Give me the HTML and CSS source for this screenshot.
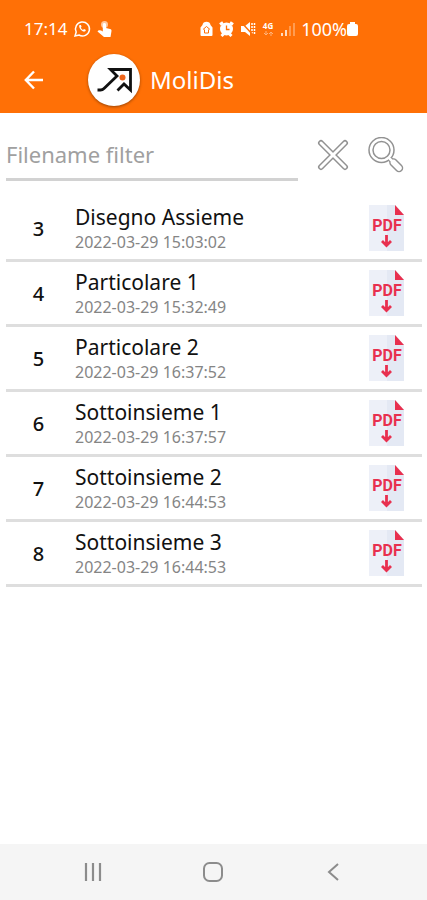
FILE: index.html
```html
<!DOCTYPE html>
<html lang="it">
<head>
    <meta charset="UTF-8">
    <meta name="viewport" content="width=device-width, initial-scale=1.0">
    <title>MoliDis</title>
    <link rel="stylesheet" href="styles.css">
</head>
<body>
    <!-- Foglio condiviso dalle icone PDF -->
    <svg class="defs" aria-hidden="true">
        <symbol id="pdf" viewBox="0 0 38 48">
            <path d="M1 1h26l9 10v36H1z" fill="#edf0f8"/>
            <path d="M19 1h8l9 10v36H19z" fill="#e4e9f4"/>
            <path d="M27 1l9 10h-9z" fill="#e8304f"/>
            <path d="M18.500 31v10M14 37l4.500 4.500L23 37" fill="none" stroke="#e8304f" stroke-width="2.800"/>
        </symbol>
    </svg>

    <header>
        <div class="status-bar">
            <div class="status-left">
                <span class="time">17:14</span>
                <svg width="18" height="18" viewBox="0 0 18 18" fill="none" stroke="#fff" stroke-width="1.500">
                    <path d="M2 16l1.200-4A7 7 0 1 1 6 15z"/>
                    <path d="M6.500 5c-1.600 2 2.500 7.500 5.500 6.500l1-1.500-2-1-1 1c-1-.5-1.700-1.200-2.200-2.200l.8-1-.7-1.800z" fill="#fff" stroke="none"/>
                </svg>
                <svg width="16" height="18" viewBox="0 0 16 18" fill="#fff">
                    <circle cx="7.500" cy="4.500" r="3.500" fill-opacity=".6"/>
                    <path d="M5.800 4.500c0-2 3.200-2 3.200 0V8l4 1c1.300.4 1.600 1 1.500 2L13.500 17H7L.5 11.500c1-1.800 3.300-1.300 5.300 0z"/>
                </svg>
            </div>
            <div class="status-right">
                <svg width="13" height="16" viewBox="0 0 13 16">
                    <path d="M2.500 4c0-4.500 8-4.500 8 0l2 2.500V14q0 1-1 1h-10q-1 0-1-1V6.500z" fill="#fff"/>
                    <path d="M3 8.500l3.500-3 3.500 3M4.500 8.500v3.500h4V8.500" fill="none" stroke="#ff7006" stroke-width="1"/>
                </svg>
                <svg width="15" height="16" viewBox="0 0 15 16">
                    <path d="M1 3.500l3-2M14 3.500l-3-2M2.500 15l2-2M12.500 15l-2-2" stroke="#fff" stroke-width="3"/>
                    <circle cx="7.500" cy="8" r="6.500" fill="#fff"/>
                    <path d="M7.500 4.500V8.500h3" fill="none" stroke="#ff7006" stroke-width="1.300"/>
                </svg>
                <svg width="16" height="16" viewBox="0 0 16 16">
                    <path d="M1 5h4l5-4v14l-5-4H1z" fill="#fff"/>
                    <path d="M12 2v12M14.500 2v12" stroke="#fff" stroke-width="1.500" stroke-dasharray="2 1"/>
                    <path d="M1 1l13 14" stroke="#ff7006" stroke-width="1.500"/>
                </svg>
                <svg width="13" height="16" viewBox="0 0 13 16">
                    <text class="net-label" x="6" y="8" text-anchor="middle">4G</text>
                    <path d="M4 10v4M2 12l2 2 2-2M9 15v-4M7 13l2-2 2 2" fill="none" stroke="#ffb27a"/>
                </svg>
                <svg width="14" height="16" viewBox="0 0 14 16" stroke-width="1.500">
                    <path d="M1 12v3M5 9v6" stroke="#fff"/>
                    <path d="M9 5v10M13 2v13" stroke="#ffaa6b"/>
                </svg>
                <span class="battery">100%
                    <svg width="11" height="16" viewBox="0 0 11 16">
                        <path d="M3 1h5v2h1q2 0 2 2v8q0 2-2 2H2q-2 0-2-2V5q0-2 2-2h1z" fill="#fff"/>
                    </svg>
                </span>
            </div>
        </div>
        <div class="app-bar">
            <button class="back" aria-label="Indietro">
                <svg width="20" height="20" viewBox="0 0 20 20" fill="none" stroke="#fff" stroke-width="2.400">
                    <path d="M19 10H2M10 1.500L1.800 10l8.200 8.500"/>
                </svg>
            </button>
            <div class="logo">
                <svg width="52" height="52" viewBox="0 0 52 52">
                    <path d="M9.500 36h3q2 0 3.500-1.500L29 22l-6.500-6.500H42.500V36L36 30l-6.500 6.500" fill="none" stroke="#111" stroke-width="2.800"/>
                    <circle cx="34.500" cy="23.500" r="3" fill="#f0651a"/>
                </svg>
            </div>
            <h1>MoliDis</h1>
        </div>
    </header>

    <main>
        <form class="filter">
            <input type="text" placeholder="Filename filter" aria-label="Filename filter">
            <button type="reset" aria-label="Cancella">
                <svg width="32" height="32" viewBox="0 0 32 32" stroke-linecap="round">
                    <path d="M4 4l24 24M28 4L4 28" stroke="#929292" stroke-width="6"/>
                    <path d="M4 4l24 24M28 4L4 28" stroke="#fff" stroke-width="3"/>
                </svg>
            </button>
            <button type="submit" aria-label="Cerca">
                <svg width="36" height="36" viewBox="0 0 36 36" fill="none" stroke-linecap="round">
                    <path d="M22 22l3 3" stroke="#929292" stroke-width="5"/>
                    <path d="M25.500 25.500l5.500 5.500" stroke="#929292" stroke-width="8.500"/>
                    <circle cx="13.500" cy="13" r="10.500" stroke="#929292" stroke-width="5.500"/>
                    <path d="M22 22l3 3" stroke="#fff" stroke-width="2.500"/>
                    <path d="M25.500 25.500l5.500 5.500" stroke="#fff" stroke-width="5.500"/>
                    <circle cx="13.500" cy="13" r="10.500" stroke="#fff" stroke-width="2.500"/>
                </svg>
            </button>
        </form>

        <ul class="file-list">
            <li class="file">
                <span class="number">3</span>
                <div class="info">
                    <h2>Disegno Assieme</h2>
                    <p>2022-03-29 15:03:02</p>
                </div>
                <button class="pdf" aria-label="Scarica Disegno Assieme"><svg><use href="#pdf"/></svg><span>PDF</span></button>
            </li>
            <li class="file">
                <span class="number">4</span>
                <div class="info">
                    <h2>Particolare 1</h2>
                    <p>2022-03-29 15:32:49</p>
                </div>
                <button class="pdf" aria-label="Scarica Particolare 1"><svg><use href="#pdf"/></svg><span>PDF</span></button>
            </li>
            <li class="file">
                <span class="number">5</span>
                <div class="info">
                    <h2>Particolare 2</h2>
                    <p>2022-03-29 16:37:52</p>
                </div>
                <button class="pdf" aria-label="Scarica Particolare 2"><svg><use href="#pdf"/></svg><span>PDF</span></button>
            </li>
            <li class="file">
                <span class="number">6</span>
                <div class="info">
                    <h2>Sottoinsieme 1</h2>
                    <p>2022-03-29 16:37:57</p>
                </div>
                <button class="pdf" aria-label="Scarica Sottoinsieme 1"><svg><use href="#pdf"/></svg><span>PDF</span></button>
            </li>
            <li class="file">
                <span class="number">7</span>
                <div class="info">
                    <h2>Sottoinsieme 2</h2>
                    <p>2022-03-29 16:44:53</p>
                </div>
                <button class="pdf" aria-label="Scarica Sottoinsieme 2"><svg><use href="#pdf"/></svg><span>PDF</span></button>
            </li>
            <li class="file">
                <span class="number">8</span>
                <div class="info">
                    <h2>Sottoinsieme 3</h2>
                    <p>2022-03-29 16:44:53</p>
                </div>
                <button class="pdf" aria-label="Scarica Sottoinsieme 3"><svg><use href="#pdf"/></svg><span>PDF</span></button>
            </li>
        </ul>
    </main>

    <nav class="nav-bar">
        <button aria-label="Recenti">
            <svg width="20" height="20" viewBox="0 0 20 20" stroke="#8c8c8c" stroke-width="2.200">
                <path d="M3 1v18M10 1v18M17 1v18"/>
            </svg>
        </button>
        <button aria-label="Home">
            <svg width="20" height="20" viewBox="0 0 20 20" fill="none" stroke="#8c8c8c" stroke-width="2">
                <rect x="1" y="1" width="18" height="18" rx="5.500"/>
            </svg>
        </button>
        <button aria-label="Indietro">
            <svg width="20" height="20" viewBox="0 0 20 20" fill="none" stroke="#8c8c8c" stroke-width="2">
                <path d="M14 2l-9 8 9 8"/>
            </svg>
        </button>
    </nav>
</body>
</html>
```
FILE: styles.css
```css
* {
    margin: 0;
    padding: 0;
    box-sizing: border-box;
}
body {
    display: flex;
    flex-direction: column;
    min-height: 100vh;
    font-family: "Noto Sans", sans-serif;
    background-color: #fff;
    color: #111;
}
button {
    display: flex;
    align-items: center;
    justify-content: center;
    background: none;
    border: none;
    cursor: pointer;
}
svg {
    display: block;
    flex-shrink: 0;
}
.defs {
    position: absolute;
    width: 0;
    height: 0;
}

/* Intestazione */
header {
    background-color: #ff7006;
    color: #fff;
    padding-top: 17px;
}
.status-bar {
    display: flex;
    justify-content: space-between;
    padding: 0 69px 0 24px;
    font-size: 17px;
    line-height: 24px;
}
.status-left,
.status-right,
.battery {
    display: flex;
    align-items: center;
}
.status-left,
.status-right {
    gap: 6px;
}
.battery {
    font-size: 18px;
}
.net-label {
    font-size: 8px;
    font-weight: bold;
    fill: #fff;
}
.app-bar {
    display: flex;
    align-items: center;
    padding: 13px 24px 7px;
}
.logo {
    width: 52px;
    height: 52px;
    margin: 0 10px 0 44px;
    border-radius: 50%;
    background-color: #fff;
    box-shadow: 0 1px 3px rgba(0, 0, 0, 0.4);
}
h1 {
    font-size: 24px;
    font-weight: 400;
    line-height: 32px;
}

/* Filtro */
main {
    flex: 1;
    padding: 0 5px 0 6px;
}
.filter {
    display: flex;
    align-items: center;
    padding: 16px 18px;
    gap: 19px;
    padding-left: 0;
}
.filter input {
    flex: 1;
    min-width: 0;
    height: 52px;
    border: none;
    border-bottom: 3px solid #d2d2d2;
    outline: none;
    background: none;
    font-family: inherit;
    font-size: 22px;
    color: #111;
}
.filter input::placeholder {
    color: #a0a0a0;
    opacity: 1;
}

/* Elenco file */
.file-list {
    list-style: none;
}
.file {
    display: flex;
    align-items: center;
    height: 65px;
    padding-right: 16px;
    border-bottom: 3px solid #dedede;
}
.number {
    width: 65px;
    text-align: center;
    font-size: 20px;
    font-weight: 500;
}
.info {
    flex: 1;
    padding-left: 4px;
}
.info h2 {
    font-size: 21px;
    font-weight: 400;
    line-height: 28px;
}
.info p {
    font-size: 16px;
    line-height: 22px;
    color: #858585;
}
/* Testo sovrapposto al foglio */
.pdf {
    display: grid;
}
.pdf svg,
.pdf span {
    grid-area: 1 / 1;
}
.pdf svg {
    width: 38px;
    height: 48px;
}
.pdf span {
    padding-bottom: 6px;
    font-family: Roboto, sans-serif;
    font-size: 16px;
    font-weight: bold;
    color: #e8304f;
}

/* Barra di navigazione */
.nav-bar {
    display: grid;
    grid-template-columns: repeat(3, 1fr);
    height: 56px;
    padding: 0 33px;
    background-color: #f5f5f5;
}
```
